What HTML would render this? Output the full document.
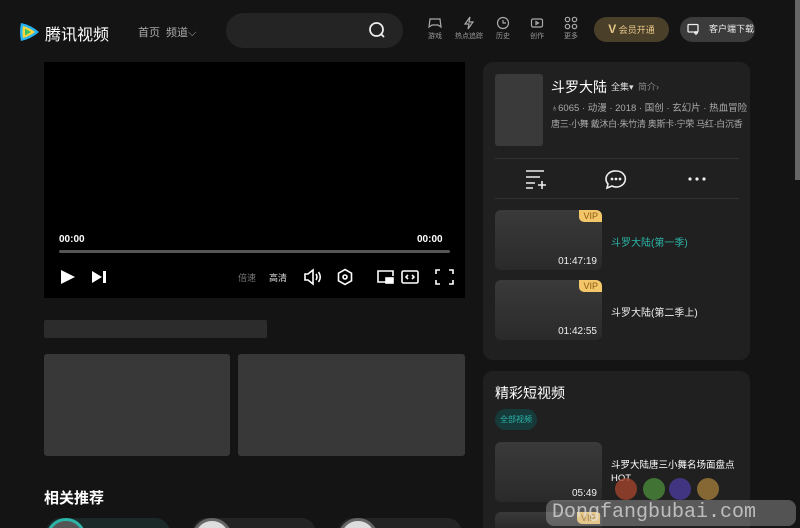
<!DOCTYPE html>
<html style="overflow:hidden;width:800px;height:528px"><head><meta charset="utf-8"><style>
*{margin:0;padding:0;box-sizing:border-box}
body{width:800px;height:528px;overflow:hidden;background:#141414;font-family:"Liberation Sans","Noto Sans CJK SC",sans-serif;color:#fff;position:relative}
.a{position:absolute;white-space:nowrap}
.nav{font-size:12px;color:#aaa}
.ic{position:absolute;width:34px;text-align:center;font-size:7px;color:#999;white-space:nowrap}
.ic svg{display:block;margin:0 auto 1px}
.thumb{position:absolute;background:linear-gradient(#3a3a3a,#2a2a2a);border-radius:6px;overflow:hidden}
.vip{position:absolute;right:0;top:0;background:#f3c66a;color:#8a5a10;font-size:9px;padding:1px 4px;border-radius:0 0 0 5px}
.dur{position:absolute;right:5px;bottom:3px;font-size:10px;color:#eee}
.clip{position:absolute;overflow:hidden}
</style></head><body>
<svg class="a" style="left:17px;top:20px" width="24" height="24" viewBox="0 0 24 24"><path d="M4 3 Q2 12 4 21 Q14 19 22 12 Q14 5 4 3Z" fill="#27b2f0"/><path d="M6 6 Q5 12 6 18 Q13 16 18 12 Q13 8 6 6Z" fill="#ffd53b"/><path d="M8 8.5 L8 15.5 L14 12Z" fill="#3ec45f"/></svg>
<div class="a" style="left:45px;top:21px;font-size:16px;color:#fff">腾讯视频</div>
<div class="a nav" style="left:138px;top:24px;font-size:11px">首页</div>
<div class="a nav" style="left:166px;top:24px;font-size:11px">频道⌵</div>
<div class="a" style="left:226px;top:13px;width:177px;height:35px;border-radius:18px;background:#242424"></div>
<svg class="a" style="left:368px;top:21px" width="18" height="18" viewBox="0 0 18 18" fill="none" stroke="#eee" stroke-width="1.8"><circle cx="8.5" cy="8.5" r="6.5"/><path d="M13 13l3 3"/></svg>
<div class="ic" style="left:418px;top:16px"><svg width="14" height="14" viewBox="0 0 14 14" fill="none" stroke="#aaa" stroke-width="1.2"><path d="M2 3h10l1 8-3-2H4l-3 2z"/></svg>游戏</div>
<div class="ic" style="left:452px;top:16px"><svg width="14" height="14" viewBox="0 0 14 14" fill="none" stroke="#aaa" stroke-width="1.2"><path d="M8 1L3 8h4l-1 5 5-7H7z"/></svg>热点追踪</div>
<div class="ic" style="left:486px;top:16px"><svg width="14" height="14" viewBox="0 0 14 14" fill="none" stroke="#aaa" stroke-width="1.2"><circle cx="7" cy="7" r="5.5"/><path d="M7 4v3h3"/></svg>历史</div>
<div class="ic" style="left:520px;top:16px"><svg width="14" height="14" viewBox="0 0 14 14" fill="none" stroke="#aaa" stroke-width="1.2"><rect x="1.5" y="3" width="11" height="8" rx="1.5"/><path d="M6 5.5v3l2.5-1.5z"/></svg>创作</div>
<div class="ic" style="left:554px;top:16px"><svg width="14" height="14" viewBox="0 0 14 14" fill="none" stroke="#aaa" stroke-width="1.2"><circle cx="3.5" cy="3.5" r="2.2"/><circle cx="10.5" cy="3.5" r="2.2"/><circle cx="3.5" cy="10.5" r="2.2"/><circle cx="10.5" cy="10.5" r="2.2"/></svg>更多</div>
<div class="a" style="left:594px;top:17px;width:75px;height:25px;border-radius:13px;background:#4a3f29;color:#e9c98a;font-size:9px;line-height:25px;text-align:center"><b style="font-size:12px">V</b> 会员开通</div>
<div class="a" style="left:680px;top:17px;width:75px;height:25px;border-radius:13px;background:#3b3b3b;color:#eee;font-size:9px;line-height:25px;padding-left:29px">客户端下载</div>
<svg class="a" style="left:687px;top:23px" width="13" height="13" viewBox="0 0 13 13" fill="none" stroke="#eee" stroke-width="1.3"><rect x="1" y="1.5" width="10" height="7.5" rx="1"/><path d="M9 8v4M7 10h4"/></svg>
<div class="a" style="left:795px;top:0;width:5px;height:180px;background:#666"></div>
<div class="a" style="left:44px;top:62px;width:421px;height:236px;background:#000"></div>
<div class="a" style="left:59px;top:234px;font-size:10px;font-weight:bold">00:00</div>
<div class="a" style="left:417px;top:234px;font-size:10px;font-weight:bold">00:00</div>
<div class="a" style="left:59px;top:250px;width:391px;height:3px;background:#555;border-radius:2px"></div>
<svg class="a" style="left:59px;top:268px" width="60" height="18" viewBox="0 0 60 18" fill="#fff"><path d="M2 2l14 7-14 7z"/><path d="M33 3l10 6-10 6z"/><rect x="44" y="3" width="3" height="12"/></svg>
<div class="a" style="left:238px;top:271px;font-size:9px;color:#777">倍速</div>
<div class="a" style="left:269px;top:271px;font-size:9px;color:#ddd">高清</div>
<svg class="a" style="left:302px;top:267px" width="155" height="20" viewBox="0 0 155 20" fill="none" stroke="#fff" stroke-width="1.6"><path d="M3 7h3l5-4v14l-5-4H3z"/><path d="M14 7q2 3 0 6M16.5 5q3.5 5 0 10"/><path d="M43 2.5l6.5 3.7v7.6L43 17.5l-6.5-3.7V6.2z"/><circle cx="43" cy="10" r="2"/><path d="M84 15H76V4h15v5"/><rect x="84" y="11" width="7" height="5" fill="#fff"/><rect x="100" y="4" width="16" height="12" rx="1.5"/><path d="M106 8l-2 2 2 2M110 8l2 2-2 2"/><path d="M134 7V3h4M147 3h4v4M151 13v4h-4M138 17h-4v-4"/></svg>
<div class="a" style="left:44px;top:320px;width:223px;height:18px;background:#2c2c2c;border-radius:2px"></div>
<div class="a" style="left:44px;top:354px;width:186px;height:102px;background:#383838;border-radius:3px"></div>
<div class="a" style="left:238px;top:354px;width:227px;height:102px;background:#383838;border-radius:3px"></div>
<div class="a" style="left:44px;top:487px;font-size:15px;font-weight:bold">相关推荐</div>
<div class="clip" style="left:40px;top:516px;width:440px;height:12px">
<div class="a" style="left:6px;top:2px;width:124px;height:30px;border-radius:15px;background:#1b2a29"></div>
<div class="a" style="left:6px;top:2px;width:40px;height:40px;border-radius:50%;border:3px solid #2bb5a8;background:#555"></div>
<div class="a" style="left:152px;top:2px;width:124px;height:30px;border-radius:15px;background:#242424"></div>
<div class="a" style="left:152px;top:2px;width:40px;height:40px;border-radius:50%;border:3px solid #666;background:#ddd"></div>
<div class="a" style="left:298px;top:2px;width:124px;height:30px;border-radius:15px;background:#242424"></div>
<div class="a" style="left:298px;top:2px;width:40px;height:40px;border-radius:50%;border:3px solid #666;background:#ddd"></div>
</div>
<div class="a" style="left:483px;top:62px;width:267px;height:298px;background:#202020;border-radius:10px"></div>
<div class="a" style="left:495px;top:74px;width:48px;height:72px;background:#3a3a3a;border-radius:3px"></div>
<div class="a" style="left:551px;top:77px;font-size:14px">斗罗大陆</div>
<div class="a" style="left:611px;top:80px;font-size:9px;color:#ddd">全集▾</div>
<div class="a" style="left:638px;top:80px;font-size:9px;color:#888">简介›</div>
<div class="a" style="left:551px;top:100px;font-size:9.5px;color:#aaa">♁6065 · 动漫 · 2018 · 国创 · 玄幻片 · 热血冒险</div>
<div class="a" style="left:551px;top:117px;font-size:9px;color:#aaa;letter-spacing:-0.3px">唐三·小舞 戴沐白·朱竹清 奥斯卡·宁荣 马红·白沉香</div>
<div class="a" style="left:495px;top:158px;width:244px;height:1px;background:#333"></div>
<svg class="a" style="left:525px;top:168px" width="185" height="22" viewBox="0 0 185 22" fill="none" stroke="#eee" stroke-width="1.6"><path d="M1 3h18M1 9h14M1 15h9M1 20h7M13 17h8M17 13v8"/><path d="M91 3a9 8 0 1 1-4 15l-5 2 1-4a9 8 0 0 1 8-13z"/><circle cx="87" cy="11" r=".6" fill="#eee"/><circle cx="91" cy="11" r=".6" fill="#eee"/><circle cx="95" cy="11" r=".6" fill="#eee"/><circle cx="165" cy="11" r=".8" fill="#eee"/><circle cx="172" cy="11" r=".8" fill="#eee"/><circle cx="179" cy="11" r=".8" fill="#eee"/></svg>
<div class="a" style="left:495px;top:198px;width:244px;height:1px;background:#333"></div>
<div class="thumb" style="left:495px;top:210px;width:107px;height:60px"><div class="vip">VIP</div><div class="dur">01:47:19</div></div>
<div class="a" style="left:611px;top:234px;font-size:10px;color:#2bb5a8">斗罗大陆(第一季)</div>
<div class="thumb" style="left:495px;top:280px;width:107px;height:60px"><div class="vip">VIP</div><div class="dur">01:42:55</div></div>
<div class="a" style="left:611px;top:304px;font-size:10px;color:#eee">斗罗大陆(第二季上)</div>
<div class="clip" style="left:483px;top:371px;width:267px;height:157px;background:#202020;border-radius:10px 10px 0 0">
<div class="a" style="left:12px;top:12px;font-size:14px">精彩短视频</div>
<div class="a" style="left:12px;top:38px;width:42px;height:21px;border-radius:11px;background:#16393a;color:#2bb5a8;font-size:8px;line-height:21px;text-align:center">全部视频</div>
<div class="thumb" style="left:12px;top:71px;width:107px;height:60px"><div class="dur">05:49</div></div>
<div class="a" style="left:128px;top:88px;font-size:9.5px;line-height:13px;color:#fff;white-space:normal;width:125px">斗罗大陆唐三小舞名场面盘点HOT</div>
<div class="thumb" style="left:12px;top:141px;width:107px;height:16px;border-radius:6px 6px 0 0"><div class="vip" style="right:auto;left:82px">VIP</div></div>
</div>
<div class="a" style="left:615px;top:478px;width:22px;height:22px;border-radius:50%;background:#a0442a;opacity:.8"></div>
<div class="a" style="left:643px;top:478px;width:22px;height:22px;border-radius:50%;background:#4a8a3a;opacity:.8"></div>
<div class="a" style="left:669px;top:478px;width:22px;height:22px;border-radius:50%;background:#4a3a9a;opacity:.8"></div>
<div class="a" style="left:697px;top:478px;width:22px;height:22px;border-radius:50%;background:#a07a3a;opacity:.8"></div>
<div class="a" style="left:546px;top:500px;width:250px;height:26px;border-radius:8px;background:rgba(200,200,200,.35);color:rgba(230,230,230,.7);font-family:'Liberation Mono',monospace;font-size:20px;line-height:26px;padding-left:6px;overflow:hidden">Dongfangbubai.com</div>
</body></html>
